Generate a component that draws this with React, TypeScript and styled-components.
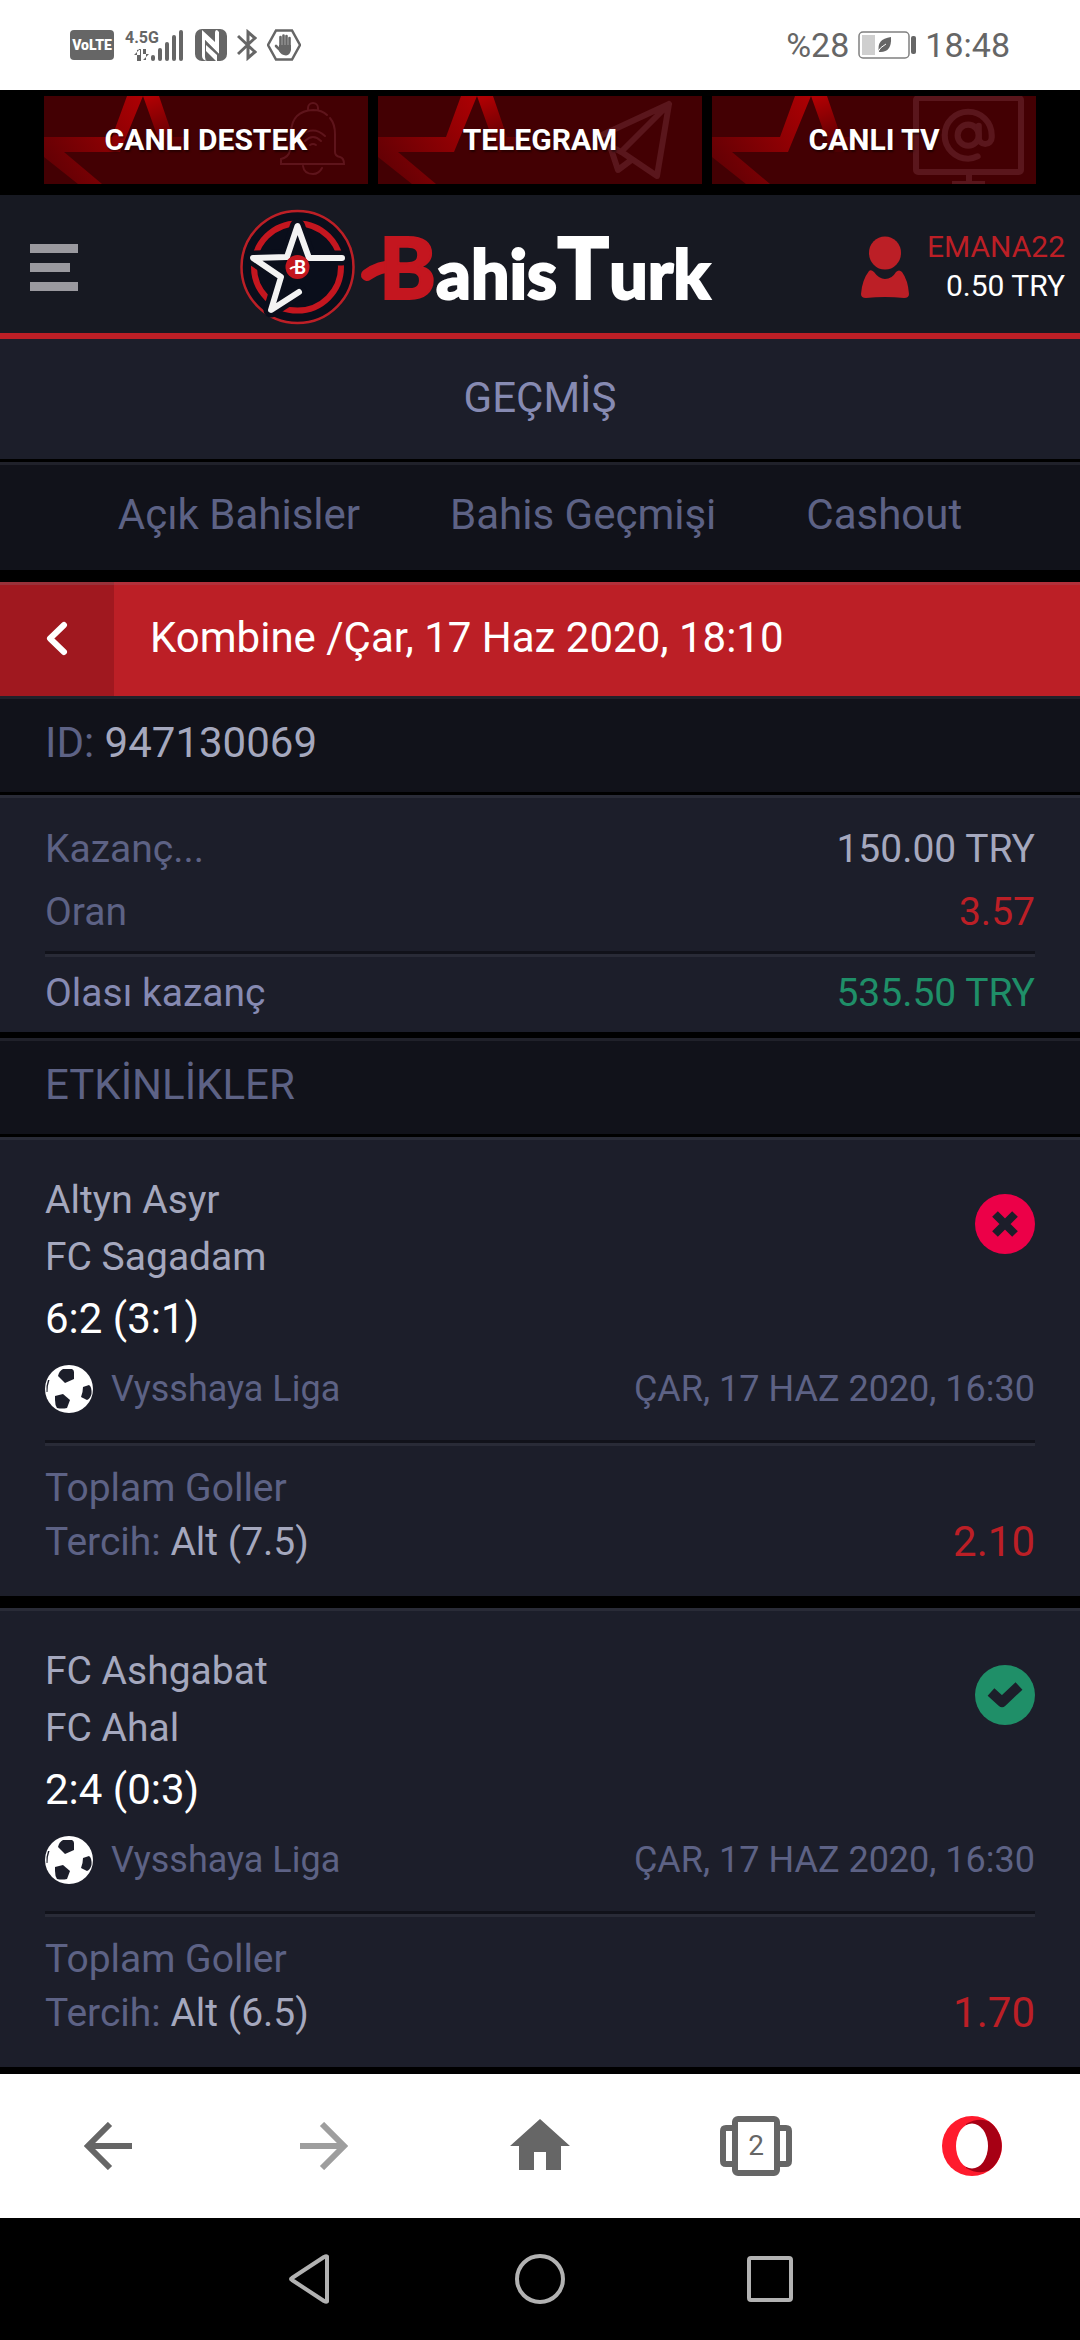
import React from "react";
import styled, { createGlobalStyle } from "styled-components";

const c = {
  black: "#000000",
  header: "#171922",
  panel: "#1c1e2a",
  strip: "#11121a",
  panelEdge: "#292b37",
  stripEdge: "#20212a",
  red: "#bc1f26",
  muted: "#5d6285",
  title: "#868ab2",
  value: "#a5a8be",
  green: "#1f8f68",
  lost: "#ec0048",
  chrome: "#666666",
};

const GlobalStyle = createGlobalStyle`
  *, *::before, *::after { box-sizing: border-box; }
  body { margin: 0; background: ${c.black}; font-family: Roboto, "Noto Sans", sans-serif; }
  button { font: inherit; border: 0; padding: 0; background: none; cursor: pointer; }
  a { text-decoration: none; color: inherit; }
  h1, h2, p, dl, dd, dt { margin: 0; font: inherit; }
  svg { display: block; flex: none; }
`;

const Page = styled.div`
  display: flex;
  flex-direction: column;
  min-height: 100vh;
`;

/* Phone status bar */

const StatusBar = styled.div`
  display: flex;
  align-items: center;
  justify-content: space-between;
  height: 90px;
  padding: 0 70px;
  background: #ffffff;
  color: ${c.chrome};
  font-size: 34px;
`;

const StatusGroup = styled.div<{ $gap: number }>`
  display: flex;
  align-items: center;
  gap: ${(p) => p.$gap}px;
`;

/* Promo links */

const Promos = styled.nav`
  display: grid;
  grid-template-columns: repeat(3, 1fr);
  gap: 10px;
  padding: 6px 44px 11px;
`;

const Promo = styled.a`
  display: grid;
  height: 88px;
  background: #430003;
  color: #ffffff;
  overflow: hidden;
  > * {
    grid-area: 1 / 1;
  }
`;

const PromoArt = styled.svg`
  width: 100%;
  height: 88px;
`;

const PromoLabel = styled.span`
  place-self: center;
  font-family: Roboto, sans-serif;
  font-weight: 700;
  font-size: 30px;
  line-height: 40px;
  white-space: nowrap;
  text-shadow: 1px 2px 2px rgba(0, 0, 0, 0.5);
`;

/* Site header */

const Header = styled.header`
  display: flex;
  align-items: center;
  height: 144px;
  padding: 6px 15px 0 30px;
  background: ${c.header};
  border-bottom: 6px solid ${c.red};
`;

const MenuButton = styled.button`
  display: flex;
  flex-direction: column;
  gap: 10px;
  width: 48px;
`;

const MenuBar = styled.span<{ $short?: boolean }>`
  width: ${(p) => (p.$short ? 40 : 48)}px;
  height: 9px;
  background: #9a999f;
`;

const LogoLink = styled.a`
  flex: 1;
  display: flex;
  justify-content: center;
  padding-left: 9px;
`;

const Account = styled.a`
  display: flex;
  align-items: center;
  gap: 18px;
  padding-bottom: 2px;
  font-size: 30px;
  line-height: 39px;
  text-align: right;
`;

const UserName = styled.div`
  color: ${c.red};
`;

const Balance = styled.div`
  color: #ffffff;
`;

/* Content strips */

const PageTitle = styled.h1`
  padding: 33px 0 36px;
  margin-bottom: 3px;
  background: ${c.panel};
  color: ${c.title};
  font-size: 42px;
  line-height: 51px;
  text-align: center;
`;

const Tabs = styled.nav`
  display: flex;
  justify-content: center;
  gap: 90px;
  padding: 24px 0 30px;
  margin-bottom: 12px;
  background: ${c.strip};
  border-top: 3px solid ${c.stripEdge};
  color: ${c.muted};
  font-size: 42px;
  line-height: 51px;
`;

const BetBar = styled.div`
  display: flex;
  background: ${c.red};
  color: #ffffff;
`;

const BackButton = styled.button`
  display: grid;
  place-items: center;
  width: 114px;
  padding-bottom: 4px;
  background: #a0181f;
  border-top: 3px solid #983139;
`;

const BetTitle = styled.h2`
  flex: 1;
  padding: 27px 36px 33px;
  border-top: 3px solid #b3303a;
  font-size: 42px;
  line-height: 51px;
`;

const Strip = styled.div<{ as?: any }>`
  padding: 18px 45px 24px;
  margin-bottom: 3px;
  background: ${c.strip};
  border-top: 3px solid ${c.stripEdge};
  color: ${c.muted};
  font-size: 42px;
  line-height: 51px;
`;

const Value = styled.span`
  color: ${c.value};
`;

const Summary = styled.dl`
  padding: 20px 45px 7px;
  margin-bottom: 6px;
  background: ${c.panel};
  border-top: 3px solid ${c.panelEdge};
  font-size: 39px;
  line-height: 63px;
`;

const SummaryRow = styled.div<{ $total?: boolean }>`
  display: flex;
  justify-content: space-between;
  color: ${(p) => (p.$total ? c.title : c.muted)};
`;

const Amount = styled.dd<{ $color: string }>`
  color: ${(p) => p.$color};
`;

const Divider = styled.div<{ $top: number; $bottom: number }>`
  height: 6px;
  margin: ${(p) => p.$top}px 0 ${(p) => p.$bottom}px;
  border-top: 3px solid ${c.strip};
  border-bottom: 3px solid ${c.panelEdge};
`;

/* Events */

const Events = styled.div`
  display: flex;
  flex-direction: column;
  gap: 12px;
  margin-bottom: 7px;
`;

const Event = styled.article`
  padding: 32px 45px 27px;
  background: ${c.panel};
  border-top: 3px solid ${c.panelEdge};
  color: ${c.muted};
  font-size: 39px;
`;

const Match = styled.div`
  display: flex;
  align-items: flex-start;
  justify-content: space-between;
  margin-bottom: 13px;
`;

const Team = styled.p`
  color: ${c.value};
  line-height: 57px;
`;

const Score = styled.p`
  color: #ffffff;
  font-size: 42px;
  line-height: 66px;
`;

const ResultBadge = styled.div`
  margin-top: 22px;
`;

const LeagueRow = styled.div`
  display: flex;
  align-items: center;
  gap: 18px;
  font-size: 36px;
  line-height: 48px;
`;

const Kickoff = styled.time`
  margin-left: auto;
`;

const Pick = styled.div`
  display: flex;
  align-items: flex-end;
  justify-content: space-between;
  line-height: 54px;
`;

const Odds = styled.span`
  color: ${c.red};
  font-size: 42px;
`;

/* Browser and system bars */

const BrowserBar = styled.nav`
  display: grid;
  grid-template-columns: repeat(5, 1fr);
  height: 144px;
  background: #ffffff;
`;

const SystemBar = styled.nav`
  display: grid;
  grid-template-columns: repeat(3, 230px);
  justify-content: center;
  height: 122px;
`;

const BarButton = styled.button`
  display: grid;
  place-items: center;
`;

const TabCount = styled.span`
  grid-area: 1 / 1;
  color: ${c.chrome};
  font-size: 28px;
  line-height: 32px;
`;

const Stack = styled.span`
  display: grid;
  place-items: center;
  > svg {
    grid-area: 1 / 1;
  }
`;

/* Drawings */

const VolteIcon = () => (
  <svg width="44" height="30" viewBox="0 0 44 30">
    <rect width="44" height="30" rx="4" fill={c.chrome} />
    <text x="22" y="20" textAnchor="middle" fontFamily="Roboto, sans-serif" fontWeight="900" fontSize="14" fill="#fff">VoLTE</text>
  </svg>
);

const SignalIcon = () => (
  <svg width="61" height="32" viewBox="0 0 61 32" fill={c.chrome}>
    <text x="1" y="14" fontFamily="Roboto, sans-serif" fontWeight="700" fontSize="16">4.5G</text>
    <path d="M13 21v11h4V20zM10 26l6-6v6zM19 20h3v11h-3zM19 31l6-6h-6z" />
    <rect x="27" y="26" width="4" height="6" rx="2" />
    <rect x="34" y="19" width="4" height="13" rx="2" />
    <rect x="41" y="13" width="4" height="19" rx="2" />
    <rect x="48" y="6" width="4" height="26" rx="2" />
    <rect x="55" y="1" width="4" height="31" rx="2" />
  </svg>
);

const NfcIcon = () => (
  <svg width="32" height="32" viewBox="0 0 32 32">
    <rect width="32" height="32" rx="7" fill={c.chrome} />
    <path d="M7 1 L20 13 V4 Q20 1 22 1 L24 3 V25 L10 11 V28 Q10 31 12 32 Q7 31 7 27z" fill="#fff" />
    <path d="M10 11 L24 25 V31 L10 17z" fill={c.chrome} />
    <path d="M11 16 L22 26 V32 H21 L11 22z" fill="#fff" />
  </svg>
);

const BluetoothIcon = () => (
  <svg width="20" height="32" viewBox="0 0 20 32" fill="none" stroke={c.chrome} strokeWidth="3">
    <path d="M1 7 L18 23 L11 29 V3 L18 9 L1 25" />
  </svg>
);

const HandIcon = () => (
  <svg width="34" height="32" viewBox="0 0 34 32">
    <path d="M9 1.500 H25 L33 16 L25 30.500 H9 L1 16z" fill="none" stroke={c.chrome} strokeWidth="2.500" />
    <g stroke={c.chrome} strokeWidth="2.600" strokeLinecap="round">
      <path d="M13.500 8V18M16.500 6.500V18M19.500 7V18M22.500 9V18M9 17l5 5" />
    </g>
    <path d="M12 16H24V21Q23 26 19 26.500Q14 26 12 22z" fill={c.chrome} />
  </svg>
);

const BatteryIcon = () => (
  <svg width="58" height="28" viewBox="0 0 58 28">
    <rect x="1" y="1" width="50" height="26" rx="4" fill="none" stroke="#808080" strokeWidth="1.500" />
    <rect x="4" y="4" width="13" height="20" fill="#cfcfcf" />
    <path d="M33 6Q34 22 21 21Q18 8 33 6z" fill={c.chrome} />
    <path d="M19 22Q22 16 28 13" stroke="#fff" strokeWidth="1" fill="none" />
    <rect x="53" y="5" width="5" height="18" rx="2" fill={c.chrome} />
  </svg>
);

const PromoStar = ({ id }: { id: string }) => (
  <>
    <defs>
      <linearGradient id={id} x1="0" y1="88" x2="120" y2="0" gradientUnits="userSpaceOnUse">
        <stop offset="0" stopColor="#5a0004" />
        <stop offset="1" stopColor="#b80003" />
      </linearGradient>
      <linearGradient id={id + "r"} x1="110" y1="0" x2="132" y2="60" gradientUnits="userSpaceOnUse">
        <stop offset="0" stopColor="#b00003" />
        <stop offset="1" stopColor="#430003" />
      </linearGradient>
    </defs>
    <path d="M0 41H68L83 0H99L76 56H20L58 88H34L0 61z" fill={`url(#${id})`} />
    <path d="M99 0H115L129 41H142V56H119z" fill={`url(#${id}r)`} />
  </>
);

const BellArt = () => (
  <g fill="none" stroke="#5e141b" strokeWidth="2" strokeLinecap="round">
    <path d="M264 14V12A5 5 0 0 1 274 12V14" />
    <path d="M247 42V36Q248 15 269 14Q278 14 283 19M286 22Q291 28 291 38V56Q291 60 296 61Q300 62 300 68H237V63Q245 61 246 54V46" />
    <path d="M259 70Q260 78 269 78Q275 78 278 72" />
    <path d="M257 40Q269 29 281 40M261 45Q269 37 277 45M266 49Q269 47 272 49" />
  </g>
);

const PlaneArt = () => (
  <g fill="none" stroke="#5a161c" strokeWidth="6" strokeLinecap="round" strokeLinejoin="round">
    <path d="M224 39L291 8L279 80L245 57M291 8L243 56M227 48L233 53L240 74L252 65M243 56L236 52" />
  </g>
);

const ScreenArt = () => (
  <g fill="none" stroke="#5a161c" strokeWidth="6">
    <rect x="204" y="2" width="105" height="74" rx="2" />
    <path d="M257 78V88M240 88H273" />
    <g transform="translate(228 11) scale(2.350)" strokeWidth="2.600" strokeLinecap="round">
      <circle cx="12" cy="12" r="4.500" />
      <path d="M16.500 8v5a2.700 2.700 0 0 0 5.500 0v-1a10 10 0 1 0-10 10q2 0 4-1" />
    </g>
  </g>
);

const Logo = () => (
  <svg width="468" height="118" viewBox="0 0 468 118" overflow="visible">
    <circle cx="57.500" cy="59" r="56" fill="#0a0e1b" stroke={c.red} strokeWidth="2.500" />
    <circle cx="57.500" cy="59" r="43.500" fill="none" stroke="#c4161f" strokeWidth="6" />
    <g fill="none" strokeLinejoin="round" strokeLinecap="round">
      <path d="M102 50H69L57.500 18L47 49L13 50L41 69L31 102L59 84" stroke="#0a0e1b" strokeWidth="15" />
      <path d="M102 50H69L57.500 18L47 49L13 50L41 69L31 102L59 84" stroke="#f3f3f3" strokeWidth="6" />
    </g>
    <circle cx="57.500" cy="59" r="12" fill="#c4161f" />
    <text x="54" y="66" fontFamily="Lato, sans-serif" fontWeight="900" fontSize="18" fill="#fff">B</text>
    <path d="M50 61Q53 58 58 59" stroke="#fff" strokeWidth="2" fill="none" />
    <path d="M127 67Q139 58 155 58" stroke="#c4161f" strokeWidth="12" strokeLinecap="round" fill="none" />
    <text x="139" y="91" fontFamily="Lato, sans-serif" fontWeight="900" fill="#fff" stroke="#fff" strokeWidth="2">
      <tspan fontSize="86" fill="#c4161f" stroke="#c4161f">B</tspan>
      <tspan fontSize="68">ahis</tspan>
      <tspan fontSize="86">T</tspan>
      <tspan fontSize="68">urk</tspan>
    </text>
  </svg>
);

const PersonIcon = () => (
  <svg width="48" height="64" viewBox="0 0 48 64" fill={c.red}>
    <ellipse cx="24" cy="19" rx="16" ry="16.500" />
    <path d="M8 37Q10 35 13 38Q18 45 24 45Q31 45 35 38Q38 35 41 38Q47 46 48 60Q48 64 43 64Q24 62 5 64Q0 64 0 60Q1 46 8 37z" />
  </svg>
);

const ChevronIcon = () => (
  <svg width="22" height="36" viewBox="0 0 22 36" fill="none" stroke="#fff" strokeWidth="6" strokeLinecap="round" strokeLinejoin="round">
    <path d="M18 4L4 17.500L18 31" />
  </svg>
);

const BallIcon = () => (
  <svg width="48" height="48" viewBox="0 0 48 48">
    <circle cx="24" cy="24" r="24" fill="#fff" />
    <g fill={c.panel}>
      <path d="M13 11Q14 6 18 4H27Q29 5 29 7V14L20 18z" />
      <path d="M10 31L18 29L25 35L22 43Q17 44 12 43Q10 40 10 35z" />
      <path d="M38 22L44 20Q47 22 46.500 29Q45 34 42 35L36 32Q38 27 38 22z" />
      <path d="M3 15L4.500 15Q2.500 20 2.500 27L1.500 27Q1 20 3 15z" />
    </g>
  </svg>
);

const LostIcon = () => (
  <svg width="60" height="60" viewBox="0 0 60 60" role="img" aria-label="Kaybetti">
    <circle cx="30" cy="30" r="30" fill={c.lost} />
    <path d="M20 20L40 40M40 20L20 40" stroke={c.panel} strokeWidth="8" />
  </svg>
);

const WonIcon = () => (
  <svg width="60" height="60" viewBox="0 0 60 60" role="img" aria-label="Kazandı">
    <circle cx="30" cy="30" r="30" fill={c.green} />
    <path d="M16 27L27 37L44 21" fill="none" stroke={c.panel} strokeWidth="10" strokeLinejoin="round" />
  </svg>
);

const ArrowIcon = ({ forward }: { forward?: boolean }) => (
  <svg width="48" height="48" viewBox="0 0 48 48" fill="none" stroke={forward ? "#9e9e9e" : c.chrome} strokeWidth="6">
    <path d={forward ? "M0 24H44M22 2L44 24L22 46" : "M48 24H4M26 2L4 24L26 46"} />
  </svg>
);

const HomeIcon = () => (
  <svg width="60" height="54" viewBox="0 0 60 54" fill={c.chrome}>
    <path d="M30 0L60 27H51V51H36V33H24V51H9V27H0z" />
  </svg>
);

const TabsIcon = () => (
  <svg width="72" height="60" viewBox="0 0 72 60" fill="none" stroke={c.chrome} strokeWidth="6">
    <rect x="15" y="3" width="42" height="54" rx="3" />
    <path d="M15 12H6Q3 12 3 15V45Q3 48 6 48H15M57 12H66Q69 12 69 15V45Q69 48 66 48H57" />
  </svg>
);

const OperaIcon = () => (
  <svg width="60" height="60" viewBox="0 0 60 60">
    <circle cx="30" cy="30" r="30" fill="#ff1b2d" />
    <path d="M24 8Q36 1 47 5.500A30 30 0 0 1 47 54.500Q36 59 24 52z" fill="#a70014" />
    <ellipse cx="30" cy="30" rx="16" ry="22.500" fill="#fff" />
  </svg>
);

const outline = { fill: "none", stroke: "#b2b2b2", strokeWidth: 4 };

const SystemBackIcon = () => (
  <svg width="44" height="50" viewBox="0 0 44 50" {...outline} strokeLinejoin="round">
    <path d="M39 2.500V47.500Q38 48 36 47L4 26Q2 25 4 24L36 3Q38 2 39 2.500z" />
  </svg>
);

const SystemHomeIcon = () => (
  <svg width="50" height="50" viewBox="0 0 50 50" {...outline}>
    <circle cx="25" cy="25" r="23" />
  </svg>
);

const SystemRecentsIcon = () => (
  <svg width="46" height="46" viewBox="0 0 46 46" {...outline}>
    <rect x="2" y="2" width="42" height="42" rx="2" />
  </svg>
);

/* Data */

const promos = [
  { id: "destek", label: "CANLI DESTEK", Art: BellArt },
  { id: "telegram", label: "TELEGRAM", Art: PlaneArt },
  { id: "tv", label: "CANLI TV", Art: ScreenArt },
];

const tabs = ["Açık Bahisler", "Bahis Geçmişi", "Cashout"];

const events = [
  { home: "Altyn Asyr", away: "FC Sagadam", score: "6:2 (3:1)", pick: "Alt (7.5)", odds: "2.10", won: false },
  { home: "FC Ashgabat", away: "FC Ahal", score: "2:4 (0:3)", pick: "Alt (6.5)", odds: "1.70", won: true },
];

export default function App() {
  return (
    <Page>
      <GlobalStyle />
      <StatusBar>
        <StatusGroup $gap={10}>
          <VolteIcon />
          <SignalIcon />
          <NfcIcon />
          <BluetoothIcon />
          <HandIcon />
        </StatusGroup>
        <StatusGroup $gap={9}>
          <span>%28</span>
          <BatteryIcon />
          <span>18:48</span>
        </StatusGroup>
      </StatusBar>

      <Promos>
        {promos.map(({ id, label, Art }) => (
          <Promo key={id} href="#">
            <PromoArt viewBox="0 0 324 88" preserveAspectRatio="xMidYMid slice" aria-hidden="true">
              <PromoStar id={id} />
              <Art />
            </PromoArt>
            <PromoLabel>{label}</PromoLabel>
          </Promo>
        ))}
      </Promos>

      <Header>
        <MenuButton aria-label="Menü">
          <MenuBar />
          <MenuBar $short />
          <MenuBar />
        </MenuButton>
        <LogoLink href="#">
          <Logo />
        </LogoLink>
        <Account href="#">
          <PersonIcon />
          <div>
            <UserName>EMANA22</UserName>
            <Balance>0.50 TRY</Balance>
          </div>
        </Account>
      </Header>

      <main>
        <PageTitle>GEÇMİŞ</PageTitle>
        <Tabs>
          {tabs.map((t) => (
            <a key={t} href="#">{t}</a>
          ))}
        </Tabs>

        <BetBar>
          <BackButton aria-label="Geri">
            <ChevronIcon />
          </BackButton>
          <BetTitle>Kombine /Çar, 17 Haz 2020, 18:10</BetTitle>
        </BetBar>
        <Strip>
          ID: <Value>947130069</Value>
        </Strip>

        <Summary>
          <SummaryRow>
            <dt>Kazanç...</dt>
            <Amount $color={c.value}>150.00 TRY</Amount>
          </SummaryRow>
          <SummaryRow>
            <dt>Oran</dt>
            <Amount $color={c.red}>3.57</Amount>
          </SummaryRow>
          <Divider $top={7} $bottom={5} />
          <SummaryRow $total>
            <dt>Olası kazanç</dt>
            <Amount $color={c.green}>535.50 TRY</Amount>
          </SummaryRow>
        </Summary>

        <Strip as="h2">ETKİNLİKLER</Strip>
        <Events>
          {events.map((e) => (
            <Event key={e.home}>
              <Match>
                <div>
                  <Team>{e.home}</Team>
                  <Team>{e.away}</Team>
                  <Score>{e.score}</Score>
                </div>
                <ResultBadge>{e.won ? <WonIcon /> : <LostIcon />}</ResultBadge>
              </Match>
              <LeagueRow>
                <BallIcon />
                <span>Vysshaya Liga</span>
                <Kickoff>ÇAR, 17 HAZ 2020, 16:30</Kickoff>
              </LeagueRow>
              <Divider $top={27} $bottom={15} />
              <Pick>
                <div>
                  <p>Toplam Goller</p>
                  <p>
                    Tercih: <Value>{e.pick}</Value>
                  </p>
                </div>
                <Odds>{e.odds}</Odds>
              </Pick>
            </Event>
          ))}
        </Events>
      </main>

      <BrowserBar>
        <BarButton aria-label="Geri"><ArrowIcon /></BarButton>
        <BarButton aria-label="İleri"><ArrowIcon forward /></BarButton>
        <BarButton aria-label="Ana sayfa"><HomeIcon /></BarButton>
        <BarButton aria-label="Sekmeler">
          <Stack>
            <TabsIcon />
            <TabCount>2</TabCount>
          </Stack>
        </BarButton>
        <BarButton aria-label="Opera"><OperaIcon /></BarButton>
      </BrowserBar>
      <SystemBar>
        <BarButton aria-label="Sistem geri"><SystemBackIcon /></BarButton>
        <BarButton aria-label="Sistem ana ekran"><SystemHomeIcon /></BarButton>
        <BarButton aria-label="Son uygulamalar"><SystemRecentsIcon /></BarButton>
      </SystemBar>
    </Page>
  );
}
